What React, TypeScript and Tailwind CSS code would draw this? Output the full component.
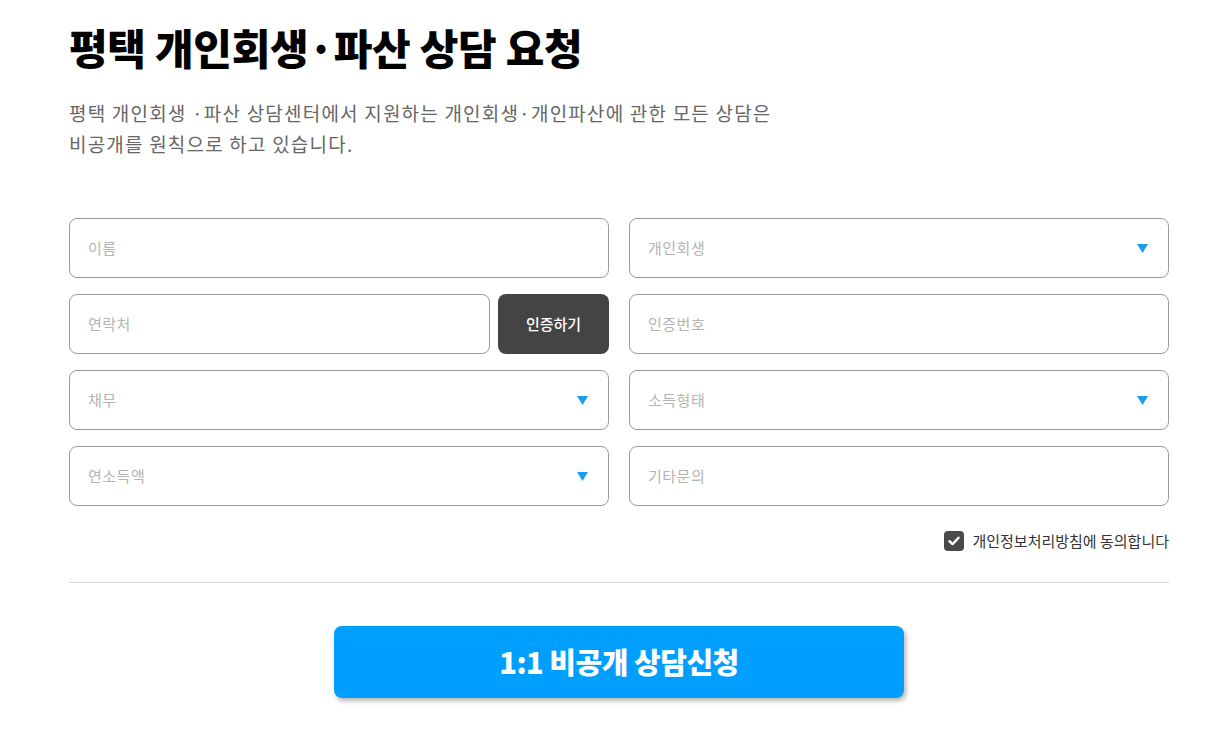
import { FC } from 'react';

const font = { fontFamily: '"Noto Sans CJK KR", "Noto Sans", sans-serif' };

const Caret: FC = () => (
  <svg width="11" height="9" viewBox="0 0 11 9" className="shrink-0">
    <path d="M0 0h11L5.5 9z" fill="#1a9bf0" />
  </svg>
);

type FieldProps = { label: string; select?: boolean; className?: string };

const Field: FC<FieldProps> = ({ label, select, className }) => (
  <div
    className={`flex h-[60px] items-center justify-between rounded-[8px] border border-[#9a9a9a] bg-white pl-[18px] pr-[20px] ${className ?? ''}`}
  >
    <span className="text-[15px] tracking-[0.5px] text-[#b4b4b4]">{label}</span>
    {select && <Caret />}
  </div>
);

export default function App() {
  return (
    <div className="min-h-[751px] w-full bg-white" style={font}>
      <div className="ml-[69px] w-[1100px] pt-[21px]">
        <h1 className="text-[42px] font-black leading-[52px] tracking-[-0.3px] text-black">
          평택 개인회생·파산 상담 요청
        </h1>

        <p className="mt-[24px] text-[19px] leading-[31px] tracking-[1.2px] text-[#666]">
          평택 개인회생 ·파산 상담센터에서 지원하는 개인회생·개인파산에 관한 모든 상담은
          <br />
          비공개를 원칙으로 하고 있습니다.
        </p>

        <div className="mt-[59px] grid grid-cols-2 gap-x-[20px] gap-y-[16px]">
          <Field label="이름" />
          <Field label="개인회생" select />

          <div className="flex gap-[8px]">
            <Field label="연락처" className="flex-1" />
            <button className="h-[60px] w-[111px] rounded-[8px] bg-[#444] text-[15px] font-medium text-white">
              인증하기
            </button>
          </div>
          <Field label="인증번호" />

          <Field label="채무" select />
          <Field label="소득형태" select />

          <Field label="연소득액" select />
          <Field label="기타문의" />
        </div>

        <div className="mt-[24px] flex items-center justify-end gap-[8px]">
          <span className="flex h-[20px] w-[20px] items-center justify-center rounded-[4px] bg-[#4a4a4a]">
            <svg width="12" height="10" viewBox="0 0 12 10">
              <path d="M1.5 5.2l3 3 6-6.5" stroke="#fff" strokeWidth="2.4" fill="none" strokeLinecap="round" strokeLinejoin="round" />
            </svg>
          </span>
          <span className="text-[15px] text-[#333]">개인정보처리방침에 동의합니다</span>
        </div>

        <div className="mt-[29px] h-px w-full bg-[#d8d8d8]" />

        <div className="mt-[43px] flex justify-center">
          <button className="h-[72px] w-[570px] rounded-[8px] bg-[#009ffd] text-[29px] font-black tracking-[-0.5px] text-white shadow-[2px_3px_5px_rgba(0,0,0,0.3)]">
            1:1 비공개 상담신청
          </button>
        </div>
      </div>
    </div>
  );
}
